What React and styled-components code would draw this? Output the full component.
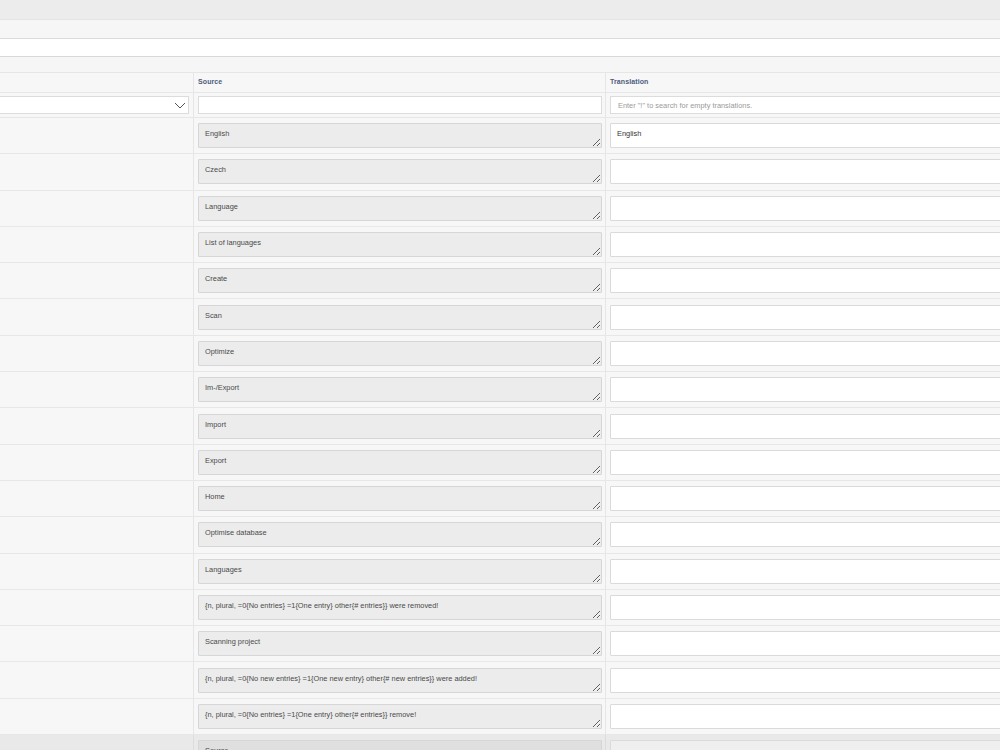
import styled, { createGlobalStyle } from 'styled-components';

const GlobalStyle = createGlobalStyle`
  html, body {
    margin: 0;
    padding: 0;
    background: #f6f6f6;
    overflow: hidden;
    font-family: "Liberation Sans", Arial, sans-serif;
  }
  * {
    box-sizing: border-box;
  }
`;

// the table is wider than the window; the page clips the translation column
const Page = styled.div`
  width: 1000px;
  height: 750px;
  overflow: hidden;
  background: #f6f6f6;
`;

const Bar = styled.div`
  height: ${({ h }) => h}px;
  background: ${({ bg }) => bg};
  border-bottom: 1px solid ${({ line }) => line};
`;

const Table = styled.div`
  display: flex;
  flex-direction: column;
  width: 1040px;
`;

const Row = styled.div`
  display: grid;
  grid-template-columns: 194px 412px 1fr;
  height: ${({ h }) => h}px;
  border-bottom: 1px solid ${({ dim }) => (dim ? '#dedede' : '#e7e7e7')};
  background: ${({ dim }) => (dim ? '#e9e9e9' : '#f7f7f7')};
`;

const Cell = styled.div`
  display: flex;
  align-items: center;
  min-width: 0;
  padding: ${({ left }) => (left ? '0 4px 0 0' : '0 3px 0 4px')};
  border-right: 1px solid ${({ dim }) => (dim ? '#dcdcdc' : '#e6e6e6')};
`;

const HeadLabel = styled.span`
  font-size: 7px;
  font-weight: bold;
  color: #4d5c7c;
  letter-spacing: 0.1px;
  margin-top: -2px;
`;

const SelectWrap = styled.div`
  position: relative;
  display: flex;
  width: 100%;
  height: 18px;
`;

const Select = styled.select`
  display: block;
  appearance: none;
  width: 100%;
  height: 18px;
  margin: 0;
  border: 1px solid #dcdcdc;
  border-left: none;
  border-radius: 0;
  background: #fff;
  font-family: inherit;
  font-size: 8px;
  color: #444;
  outline: none;
`;

const Chevron = styled.svg`
  position: absolute;
  right: 3px;
  top: 6px;
  pointer-events: none;
`;

const FilterInput = styled.input`
  display: block;
  width: 100%;
  height: 18px;
  margin: 0;
  border: 1px solid #dcdcdc;
  background: #fff;
  font-family: inherit;
  font-size: 7.4px;
  color: #444;
  padding: 0 7px;
  outline: none;

  &::placeholder {
    color: #9a9a9a;
  }
`;

const Area = styled.textarea`
  display: block;
  width: 100%;
  height: 25px;
  margin: 0;
  padding: 5px 6px;
  font-family: "Liberation Sans", Arial, sans-serif;
  font-size: 7.4px;
  line-height: 9px;
  color: ${({ source }) => (source ? '#4a4a4a' : '#333')};
  background: ${({ source, dim }) =>
    source ? (dim ? '#dfdfdf' : '#ececec') : dim ? '#efefef' : '#fff'};
  border: 1px solid ${({ source }) => (source ? '#d6d6d6' : '#dadada')};
  border-radius: 1px;
  resize: ${({ source }) => (source ? 'both' : 'none')};
  outline: none;
  overflow: hidden;
`;

const entries = [
  ['English', 'English'],
  ['Czech', ''],
  ['Language', ''],
  ['List of languages', ''],
  ['Create', ''],
  ['Scan', ''],
  ['Optimize', ''],
  ['Im-/Export', ''],
  ['Import', ''],
  ['Export', ''],
  ['Home', ''],
  ['Optimise database', ''],
  ['Languages', ''],
  ['{n, plural, =0{No entries} =1{One entry} other{# entries}} were removed!', ''],
  ['Scanning project', ''],
  ['{n, plural, =0{No new entries} =1{One new entry} other{# new entries}} were added!', ''],
  ['{n, plural, =0{No entries} =1{One entry} other{# entries}} remove!', ''],
];

const EntryRow = ({ source, translation, dim }) => (
  <Row h={36.3} dim={dim}>
    <Cell left dim={dim} />
    <Cell dim={dim}>
      <Area source dim={dim} readOnly value={source} />
    </Cell>
    <Cell dim={dim}>
      <Area dim={dim} defaultValue={translation} />
    </Cell>
  </Row>
);

export default function App() {
  return (
    <Page>
      <GlobalStyle />
      <Bar h={20} bg="#ececec" line="#e4e4e4" />
      <Bar h={19} bg="#f6f6f6" line="#dadada" />
      <Bar h={18} bg="#ffffff" line="#d8d8d8" />
      <Bar h={16} bg="#f6f6f6" line="#e6e6e6" />
      <Table>
        <Row h={20}>
          <Cell left />
          <Cell>
            <HeadLabel>Source</HeadLabel>
          </Cell>
          <Cell>
            <HeadLabel>Translation</HeadLabel>
          </Cell>
        </Row>
        <Row h={25}>
          <Cell left>
            <SelectWrap>
              <Select defaultValue="">
                <option value="" />
              </Select>
              <Chevron width="12" height="7" viewBox="0 0 12 7">
                <polyline points="1,1 6,6 11,1" fill="none" stroke="#555" strokeWidth="1" />
              </Chevron>
            </SelectWrap>
          </Cell>
          <Cell>
            <FilterInput />
          </Cell>
          <Cell>
            <FilterInput placeholder={'Enter "!" to search for empty translations.'} />
          </Cell>
        </Row>
        {entries.map(([s, t], i) => (
          <EntryRow key={i} source={s} translation={t} />
        ))}
        <EntryRow source="Source" translation="" dim />
      </Table>
    </Page>
  );
}
